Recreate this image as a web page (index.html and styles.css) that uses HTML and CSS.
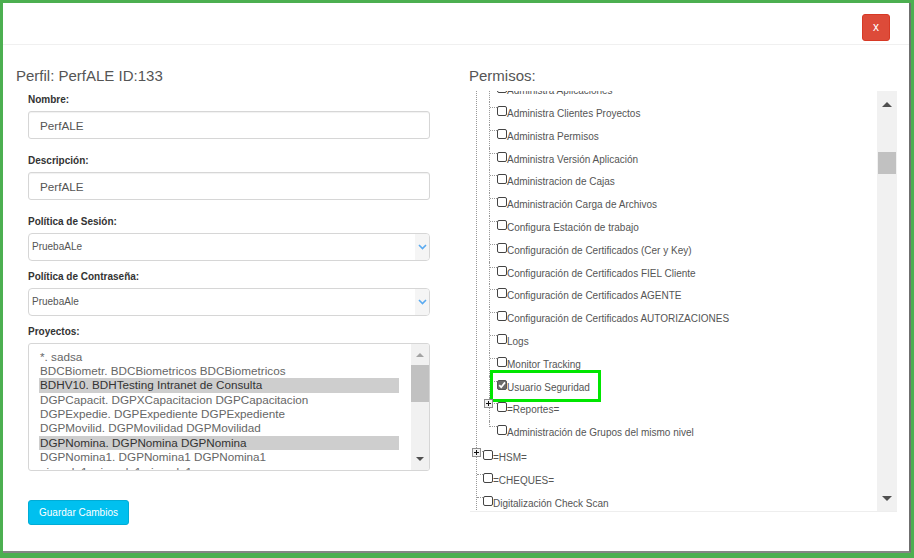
FILE: index.html
```html
<!DOCTYPE html>
<html lang="es">
<head>
  <meta charset="UTF-8" />
  <meta name="viewport" content="width=device-width, initial-scale=1.0" />
  <title>Perfil</title>
  <link rel="stylesheet" href="styles.css">
</head>
<body>

  <div class="modal">
    <div class="modal-header">
      <button class="btn-close">x</button>
    </div>

    <div class="modal-body">
      <div class="col">
        <h4 class="col-title">Perfil: PerfALE ID:133</h4>
        <div class="form">
          <div class="group">
            <label>Nombre:</label>
            <input class="field" type="text" value="PerfALE">
          </div>
          <div class="group">
            <label>Descripción:</label>
            <input class="field" type="text" value="PerfALE">
          </div>
          <div class="group tight">
            <label>Política de Sesión:</label>
            <div class="select">
              <span class="select-text">PruebaALe</span>
              <span class="select-arrow">
                <svg width="9" height="6" viewBox="0 0 9 6"><polyline points="1,1 4.5,4.5 8,1" fill="none" stroke="#5aaaf0" stroke-width="1.6"/></svg>
              </span>
            </div>
          </div>
          <div class="group tight">
            <label>Política de Contraseña:</label>
            <div class="select">
              <span class="select-text">PruebaAle</span>
              <span class="select-arrow">
                <svg width="9" height="6" viewBox="0 0 9 6"><polyline points="1,1 4.5,4.5 8,1" fill="none" stroke="#5aaaf0" stroke-width="1.6"/></svg>
              </span>
            </div>
          </div>
          <div class="group last">
            <label>Proyectos:</label>
            <div class="listbox">
              <div class="list-items">
                <div class="opt">*. sadsa</div>
                <div class="opt">BDCBiometr. BDCBiometricos BDCBiometricos</div>
                <div class="opt selected">BDHV10. BDHTesting Intranet de Consulta</div>
                <div class="opt">DGPCapacit. DGPXCapacitacion DGPCapacitacion</div>
                <div class="opt">DGPExpedie. DGPExpediente DGPExpediente</div>
                <div class="opt">DGPMovilid. DGPMovilidad DGPMovilidad</div>
                <div class="opt selected">DGPNomina. DGPNomina DGPNomina</div>
                <div class="opt">DGPNomina1. DGPNomina1 DGPNomina1</div>
                <div class="opt">ejemplo1. ejemplo1 ejemplo1</div>
              </div>
              <div class="vscroll small">
                <div class="sb-btn up-btn"><span class="tri-up light"></span></div>
                <div class="sb-track"><div class="sb-thumb list-thumb"></div></div>
                <div class="sb-btn down-btn"><span class="tri-down"></span></div>
              </div>
            </div>
          </div>
          <button class="btn-save">Guardar Cambios</button>
        </div>
      </div>

      <div class="col">
        <h4 class="col-title">Permisos:</h4>
        <div class="tree">
          <div class="tree-view">
            <ul class="tree-root">
              <li>
                <ul class="tree-sub">
                  <li><div class="node"><span class="conn"></span><span class="chk"></span><span class="lbl">Administra Aplicaciones</span></div></li>
                  <li><div class="node"><span class="conn"></span><span class="chk"></span><span class="lbl">Administra Clientes Proyectos</span></div></li>
                  <li><div class="node"><span class="conn"></span><span class="chk"></span><span class="lbl">Administra Permisos</span></div></li>
                  <li><div class="node"><span class="conn"></span><span class="chk"></span><span class="lbl">Administra Versión Aplicación</span></div></li>
                  <li><div class="node"><span class="conn"></span><span class="chk"></span><span class="lbl">Administracion de Cajas</span></div></li>
                  <li><div class="node"><span class="conn"></span><span class="chk"></span><span class="lbl">Administración Carga de Archivos</span></div></li>
                  <li><div class="node"><span class="conn"></span><span class="chk"></span><span class="lbl">Configura Estación de trabajo</span></div></li>
                  <li><div class="node"><span class="conn"></span><span class="chk"></span><span class="lbl">Configuración de Certificados (Cer y Key)</span></div></li>
                  <li><div class="node"><span class="conn"></span><span class="chk"></span><span class="lbl">Configuración de Certificados FIEL Cliente</span></div></li>
                  <li><div class="node"><span class="conn"></span><span class="chk"></span><span class="lbl">Configuración de Certificados AGENTE</span></div></li>
                  <li><div class="node"><span class="conn"></span><span class="chk"></span><span class="lbl">Configuración de Certificados AUTORIZACIONES</span></div></li>
                  <li><div class="node"><span class="conn"></span><span class="chk"></span><span class="lbl">Logs</span></div></li>
                  <li><div class="node"><span class="conn"></span><span class="chk"></span><span class="lbl">Monitor Tracking</span></div></li>
                  <li>
                    <div class="node">
                      <span class="conn"></span>
                      <span class="chk checked">
                        <svg width="8" height="8" viewBox="0 0 8 8"><polyline points="1.2,4.2 3.2,6.2 7,1.4" fill="none" stroke="#fff" stroke-width="1.7"/></svg>
                      </span>
                      <span class="lbl">Usuario Seguridad</span>
                      <span class="mark"></span>
                    </div>
                  </li>
                  <li>
                    <div class="node">
                      <span class="plus">
                        <svg width="9" height="9" viewBox="0 0 9 9"><rect x="0.5" y="0.5" width="8" height="8" fill="#f2f2f2" stroke="#8e8e8e"/><path d="M2 4.5H7M4.5 2V7" stroke="#111" stroke-width="1"/></svg>
                      </span>
                      <span class="conn"></span><span class="chk"></span><span class="lbl">=Reportes=</span>
                    </div>
                  </li>
                  <li><div class="node"><span class="conn"></span><span class="chk"></span><span class="lbl">Administración de Grupos del mismo nivel</span></div></li>
                </ul>
              </li>
              <li class="gap">
                <div class="node top">
                  <span class="plus top-plus">
                    <svg width="9" height="9" viewBox="0 0 9 9"><rect x="0.5" y="0.5" width="8" height="8" fill="#f2f2f2" stroke="#8e8e8e"/><path d="M2 4.5H7M4.5 2V7" stroke="#111" stroke-width="1"/></svg>
                  </span>
                  <span class="conn"></span><span class="chk"></span><span class="lbl">=HSM=</span>
                </div>
              </li>
              <li><div class="node top"><span class="conn"></span><span class="chk"></span><span class="lbl">=CHEQUES=</span></div></li>
              <li><div class="node top"><span class="conn"></span><span class="chk"></span><span class="lbl">Digitalización Check Scan</span></div></li>
            </ul>
          </div>
          <div class="vscroll">
            <div class="sb-btn"><span class="tri-up"></span></div>
            <div class="sb-track"><div class="sb-thumb tree-thumb"></div></div>
            <div class="sb-btn"><span class="tri-down"></span></div>
          </div>
        </div>
      </div>
    </div>
  </div>

</body>
</html>
```

FILE: styles.css
```css
    html, body {
      height: 100%;
    }

    body {
      margin: 0;
      padding: 3px 3px 5px 3px;
      box-sizing: border-box;
      background: #4caf50;
      font-family: 'Liberation Sans', Arial, sans-serif;
      color: #555;
    }

    .modal {
      width: 908px;
      height: 550px;
      box-sizing: border-box;
      background: #fff;
      border-right: 2px solid #6f6f6f;
      border-bottom: 2px solid #858585;
      overflow: hidden;
    }

    .modal-header {
      height: 42px;
      box-sizing: border-box;
      padding: 11px 19px 0 0;
      border-bottom: 1px solid #f0f0f0;
      display: flex;
      justify-content: flex-end;
      align-items: flex-start;
    }

    .btn-close {
      width: 28px;
      height: 27px;
      padding: 0;
      background: #dd4b39;
      border: 1px solid #d73925;
      border-radius: 3px;
      color: #fff;
      font-family: 'Liberation Sans', Arial, sans-serif;
      font-size: 12px;
      line-height: 23px;
      cursor: pointer;
    }

    .modal-body {
      display: grid;
      grid-template-columns: 425px 428px;
      column-gap: 28px;
      padding: 21px 12px 0 13px;
    }

    .col-title {
      margin: 0;
      font-size: 15px;
      line-height: 20px;
      font-weight: normal;
      color: #555;
    }

    /* left column form */

    .form {
      padding: 0 11px 0 12px;
      margin-top: 7px;
    }

    .group {
      margin-bottom: 15px;
    }

    .group.tight {
      margin-bottom: 9px;
    }

    .group.last {
      margin-bottom: 0;
    }

    .group label {
      display: block;
      font-size: 10px;
      line-height: 14px;
      font-weight: bold;
      color: #333;
      margin-bottom: 4px;
    }

    .field {
      display: block;
      width: 100%;
      height: 28px;
      box-sizing: border-box;
      margin: 0;
      padding: 0 11px;
      border: 1px solid #d6d6d6;
      border-radius: 3px;
      box-shadow: inset 0 1px 1px rgba(0,0,0,0.06);
      font-family: 'Liberation Sans', Arial, sans-serif;
      font-size: 11.7px;
      color: #555;
      outline: none;
    }

    .select {
      display: flex;
      height: 28px;
      box-sizing: border-box;
      border: 1px solid #d6d6d6;
      border-radius: 4px;
      overflow: hidden;
    }

    .select-text {
      flex: 1;
      padding-left: 3px;
      font-size: 10px;
      line-height: 26px;
      color: #555;
    }

    .select-arrow {
      width: 14px;
      background: #f5f5f5;
      display: flex;
      align-items: center;
      justify-content: center;
    }

    .listbox {
      display: flex;
      height: 128px;
      box-sizing: border-box;
      border: 1px solid #d6d6d6;
      border-radius: 3px;
      overflow: hidden;
    }

    .list-items {
      flex: 1;
      padding: 5.5px 12px 0 10px;
      overflow: hidden;
    }

    .opt {
      padding-left: 1px;
      font-size: 11.7px;
      line-height: 14.4px;
      height: 14.4px;
      white-space: nowrap;
      color: #666;
    }

    .opt.selected {
      background: #cecece;
      color: #333;
    }

    .btn-save {
      margin-top: 29px;
      width: 101px;
      height: 25px;
      padding: 0;
      background: #00c0ef;
      border: 1px solid #00acd6;
      border-radius: 3px;
      color: #fff;
      font-family: 'Liberation Sans', Arial, sans-serif;
      font-size: 10px;
      cursor: pointer;
    }

    /* scrollbars */

    .vscroll {
      width: 20px;
      background: #f1f1f1;
      display: flex;
      flex-direction: column;
    }

    .vscroll.small {
      width: 18px;
    }

    .sb-btn {
      height: 26px;
      display: flex;
      align-items: center;
      justify-content: center;
      flex: none;
    }

    .vscroll.small .up-btn {
      height: 21px;
    }

    .vscroll.small .down-btn {
      height: 22px;
    }

    .sb-track {
      flex: 1;
    }

    .sb-thumb {
      background: #c1c1c1;
      margin: 0 1px;
    }

    .list-thumb {
      height: 37px;
      margin: 0;
    }

    .tree-thumb {
      margin-top: 35px;
      height: 22px;
    }

    .tri-up {
      width: 0;
      height: 0;
      border-left: 5px solid transparent;
      border-right: 5px solid transparent;
      border-bottom: 5px solid #505050;
    }

    .tri-down {
      width: 0;
      height: 0;
      border-left: 5px solid transparent;
      border-right: 5px solid transparent;
      border-top: 5px solid #505050;
    }

    .vscroll.small .tri-up,
    .vscroll.small .tri-down {
      border-left-width: 4px;
      border-right-width: 4px;
      border-bottom-width: 4px;
      border-top-width: 4px;
    }

    .tri-up.light {
      border-bottom-color: #a3a3a3;
    }

    /* permissions tree */

    .tree {
      display: flex;
      height: 421px;
      box-sizing: border-box;
      margin-top: 5px;
      margin-left: 1px;
      border-bottom: 1px solid #eee;
    }

    .tree-view {
      flex: 1;
      overflow: hidden;
      padding-left: 6px;
    }

    .tree-root {
      list-style: none;
      margin: -11.8px 0 0;
      padding: 0;
      border-left: 1px dotted #999;
    }

    .tree-root > li.gap {
      margin-top: 2px;
    }

    .tree-sub {
      list-style: none;
      margin: 0 0 0 12px;
      padding: 0;
    }

    .tree-sub > li {
      position: relative;
    }

    .tree-sub > li::before {
      content: "";
      position: absolute;
      left: 0;
      top: 0;
      bottom: 0;
      border-left: 1px dotted #999;
    }

    .tree-sub > li:last-child::before {
      bottom: auto;
      height: 6px;
    }

    .node {
      position: relative;
      display: flex;
      align-items: flex-start;
      height: 22.8px;
      box-sizing: border-box;
      padding: 4px 0 0 1px;
      font-size: 10px;
      color: #555;
    }

    .node.top {
      padding-left: 0;
    }

    .conn {
      width: 7px;
      margin-top: 1px;
      border-top: 1px dotted #999;
      flex: none;
    }

    .node.top .conn {
      width: 6px;
    }

    .chk {
      width: 10px;
      height: 10px;
      box-sizing: border-box;
      border: 1px solid #444;
      border-radius: 2px;
      background: #fff;
      flex: none;
      display: flex;
      align-items: center;
      justify-content: center;
    }

    .chk.checked {
      background: #6b6b6b;
      border-color: #555;
    }

    .lbl {
      margin-top: 2px;
      line-height: 12px;
      white-space: nowrap;
    }

    .plus {
      position: absolute;
      left: -5px;
      top: 1px;
      width: 9px;
      height: 9px;
      display: flex;
    }

    .plus.top-plus {
      top: 2px;
    }

    .mark {
      position: absolute;
      left: 1px;
      top: -6px;
      width: 111px;
      height: 32px;
      box-sizing: border-box;
      border: 3px solid #00e600;
    }
```
